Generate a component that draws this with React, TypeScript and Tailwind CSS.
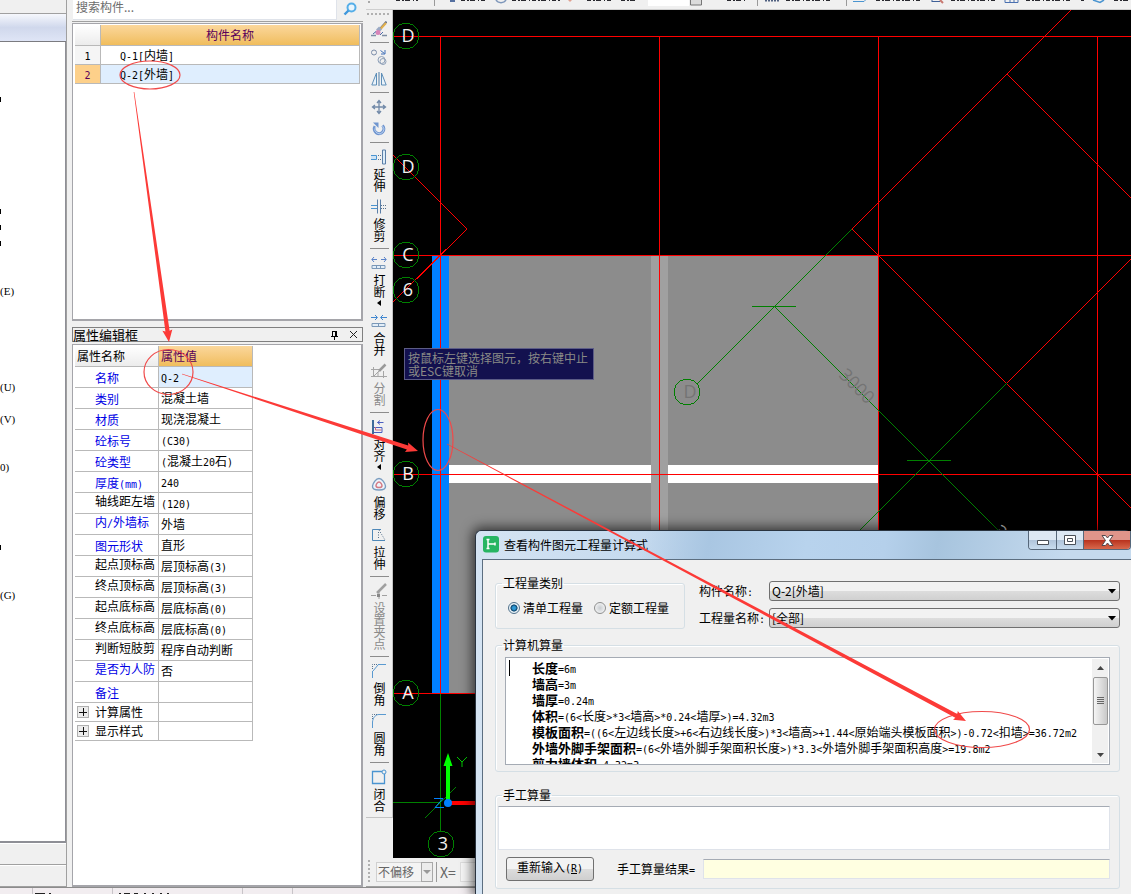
import React from "react";

/* Chinese glyphs take the inherited size; Latin runs use a half-width monospace. */
function Mixed({ text }: { text: string }) {
  return (
    <>
      {text
        .split(/([\x20-\x7e]+)/)
        .filter(Boolean)
        .map((part, i) =>
          /^[\x20-\x7e]+$/.test(part) ? (
            <span key={i} className="font-['DejaVu_Sans_Mono',monospace] text-[10px] leading-none">
              {part}
            </span>
          ) : (
            part
          ),
        )}
    </>
  );
}

const shortcuts: Record<number, string> = { 0: "|", 7: "|", 8: "|", 9: "|", 12: "(E)", 18: "(U)", 20: "(V)", 23: "0)", 28: "|", 31: "(G)" };

function ModuleStrip() {
  return (
    <aside className="flex w-[67px] shrink-0 flex-col border-r border-[#a0a0a0] bg-[#f0f0f0]">
      <div className="h-[14px] shrink-0 border-b border-[#a0a0a0]" />
      <div className="h-7 shrink-0 border-b border-[#7b7b80] bg-linear-to-b from-[#f6f8fd] via-[#d0d8ec] to-[#dfe5f6]" />
      <ul className="flex-1 overflow-hidden border-r border-b-2 border-[#8e8f96] bg-white pt-[49px]">
        {Array.from({ length: 32 }, (_, i) => (
          <li key={i} className="flex h-4 items-center text-[12px] text-black">
            {shortcuts[i] === "|" ? (
              <span className="h-[5px] w-px bg-black" />
            ) : (
              <span className="font-['Liberation_Serif',serif] text-[11px]">{shortcuts[i]}</span>
            )}
          </li>
        ))}
      </ul>
      <div className="h-[22px] shrink-0 border-b border-[#a0a0a0] border-t border-t-white" />
      <div className="h-[22px] shrink-0 border-b border-[#a0a0a0] border-t border-t-white" />
    </aside>
  );
}

const properties: { name: string; value: string; black?: boolean; wrap?: boolean; group?: boolean }[] = [
  { name: "名称", value: "Q-2" },
  { name: "类别", value: "混凝土墙" },
  { name: "材质", value: "现浇混凝土" },
  { name: "砼标号", value: "(C30)" },
  { name: "砼类型", value: "(混凝土20石)" },
  { name: "厚度(mm)", value: "240" },
  { name: "轴线距左墙", value: "(120)", black: true, wrap: true },
  { name: "内/外墙标", value: "外墙", wrap: true },
  { name: "图元形状", value: "直形" },
  { name: "起点顶标高", value: "层顶标高(3)", black: true, wrap: true },
  { name: "终点顶标高", value: "层顶标高(3)", black: true, wrap: true },
  { name: "起点底标高", value: "层底标高(0)", black: true, wrap: true },
  { name: "终点底标高", value: "层底标高(0)", black: true, wrap: true },
  { name: "判断短肢剪", value: "程序自动判断", black: true, wrap: true },
  { name: "是否为人防", value: "否", wrap: true },
  { name: "备注", value: "" },
  { name: "计算属性", value: "", black: true, group: true },
  { name: "显示样式", value: "", black: true, group: true },
];

function Panels() {
  return (
    <section className="ml-[5px] flex w-[291px] shrink-0 flex-col text-[12px] leading-4 text-black">
      <div className="flex h-[22px] shrink-0 border-b border-[#a0a0a0]">
        <input
          aria-label="搜索构件"
          placeholder="搜索构件..."
          className="mb-px ml-px w-[264px] border-r border-b border-[#dfe3ea] bg-white px-[3px] pb-1.5 text-[12px] outline-none placeholder:text-[#6d6d6d]"
        />
        <button aria-label="搜索" className="flex flex-1 items-center justify-center pb-1">
          <svg width="14" height="14" viewBox="0 0 14 14" fill="none">
            <circle cx="8.5" cy="5.5" r="4" stroke="#55aee8" strokeWidth="2" fill="#e9f5fd" />
            <path d="M5.5 8.5 1.5 12.5" stroke="#3f97dc" strokeWidth="2.4" />
          </svg>
        </button>
      </div>
      <div className="mt-px h-[298px] shrink-0 border-2 border-t border-l border-[#a5a5aa] bg-white pt-px pr-px pl-0.5">
        <table className="w-full border-separate border-spacing-0 leading-[14px]">
          <thead>
            <tr>
              <th aria-label="序号" className="h-[21px] w-[26px] border-r border-b border-[#b9b9b9] bg-linear-to-b from-white to-[#ececec] p-0" />
              <th className="border-r border-b border-[#b9b9b9] bg-linear-to-b from-[#fbd79b] to-[#f0bd5c] p-0 font-normal text-[#5a005a]">构件名称</th>
            </tr>
          </thead>
          <tbody>
            <tr>
              <td className="h-[19px] border-r border-b border-[#b9b9b9] bg-[#f5f5f5] p-0 text-center"><Mixed text="1" /></td>
              <td className="border-r border-b border-[#b9b9b9] py-0 pr-0 pl-[19px]"><Mixed text="Q-1[内墙]" /></td>
            </tr>
            <tr>
              <td className="h-[19px] border-r border-b border-[#b9b9b9] bg-[#fdd08a] p-0 text-center text-[#5a005a]"><Mixed text="2" /></td>
              <td className="border-r border-b border-[#b9b9b9] bg-[#dfeefe] py-0 pr-0 pl-[19px]"><Mixed text="Q-2[外墙]" /></td>
            </tr>
          </tbody>
        </table>
      </div>
      <div className="mt-[6px] flex h-[15px] shrink-0 items-center border border-[#808080] bg-[#f0f0f0]">
        <h2 className="flex-1 text-[13px]">属性编辑框</h2>
        <button aria-label="固定" className="mr-[10px]">
          <svg width="9" height="10" viewBox="0 0 9 10" fill="none" stroke="#000">
            <path d="M2.5 1v5M2 1.5h5M1 6.5h7M4.5 7v3" />
            <path d="M6 1v5" strokeWidth="2" />
          </svg>
        </button>
        <button aria-label="关闭" className="mr-1">
          <svg width="9" height="9" viewBox="0 0 9 9" stroke="#222"><path d="m1 1 7 7M8 1 1 8" /></svg>
        </button>
      </div>
      <div className="mt-[2px] flex-1 border-2 border-t border-l border-[#a5a5aa] bg-white pt-px pl-0.5">
        <table className="table-fixed border-separate border-spacing-0">
          <thead>
            <tr>
              <th className="h-[21px] w-[84px] border-r border-b border-[#b9b9b9] bg-linear-to-b from-white to-[#ececec] p-0 pl-0.5 text-left font-normal">属性名称</th>
              <th className="w-[94px] border-r border-b border-[#b9b9b9] bg-linear-to-b from-[#fbd79b] to-[#f0bd5c] p-0 pl-0.5 text-left font-normal text-[#5a005a]">属性值</th>
            </tr>
          </thead>
          <tbody>
            {properties.map((p, i) => (
              <tr key={p.name} className={p.group ? "h-[19px]" : "h-[21px]"}>
                <td className={"overflow-hidden border-r border-b border-[#b9b9b9] p-0 whitespace-nowrap " + (p.black ? "" : "text-[#0000e6]")}>
                  <div className={"flex items-center " + (p.wrap ? "h-5 pb-1" : p.group ? "h-[18px]" : "h-5 pt-0.5")}>
                    <span className="flex w-5 shrink-0 pl-0.5">
                      {p.group && (
                        <button aria-label="展开" className="flex size-3 items-center justify-center border border-[#b0b0b0] bg-[#ececec]">
                          <svg width="8" height="8" viewBox="0 0 8 8" stroke="#111"><path d="M0 4.5h8M4.5 0v8" /></svg>
                        </button>
                      )}
                    </span>
                    <span><Mixed text={p.name} /></span>
                  </div>
                </td>
                <td className={"border-r border-b border-[#b9b9b9] py-0 pr-0 pl-0.5 whitespace-nowrap " + (i === 0 ? "bg-[#dfeefe]" : "")}>
                  <Mixed text={p.value} />
                </td>
              </tr>
            ))}
          </tbody>
        </table>
      </div>
    </section>
  );
}

const blue = "#5b7fa8";
const sky = "#4a94d0";
const icons: Record<string, React.ReactNode> = {
  brush: (
    <>
      <path d="M0 14.5h5M11 14.5h5" stroke="#7d8da3" strokeWidth="1.5" />
      <path d="M15.5.5 9 8" stroke="#6b7688" strokeWidth="2" />
      <path d="m15 2-5.500 6" stroke="#e3b04b" strokeWidth="2" />
      <path d="m9.500 7-3 3" stroke="#9aa9c4" strokeWidth="4" />
      <circle cx="7" cy="11.5" r="2.5" fill="#d884b8" />
      <path d="m2 13 3-2.500M9 14l3-3" stroke="#4a6ea8" />
    </>
  ),
  copy: (
    <>
      <circle cx="3" cy="3.5" r="2.5" stroke="#7b8ca8" />
      <circle cx="10.5" cy="11" r="3.5" stroke="#8ea0b8" />
      <circle cx="12" cy="12.5" r="3" stroke="#8ea0b8" />
      <path d="m9.500 1.500 4 3M14 1v4h-4" stroke="#3f6fb8" />
    </>
  ),
  mirror: (
    <>
      <path d="M5.5 2v12H.8zM10.5 2v12h4.700z" stroke="#5f8fb8" fill="#eaf3fa" />
      <path d="M8 1v14" stroke="#4f7fa8" />
    </>
  ),
  move: <path d="M8 2v12M2 8h12M6 4l2-2.500L10 4M6 12l2 2.500 2-2.500M4 6 1.500 8 4 10M12 6l2.500 2-2.500 2" stroke="#7189a8" strokeWidth="1.3" />,
  rotate: (
    <>
      <path d="M11.500 4.500a4.800 4.800 0 1 1-7.500.8" stroke="#6f95cf" strokeWidth="3" />
      <path d="M2 1.500h5.500V7z" fill="#6f95cf" />
      <path d="M11.500 5a4.500 4.500 0 1 1-7 1" stroke="#b8cff0" />
    </>
  ),
  extend: (
    <>
      <path d="M11.500 1h3v14h-3z" stroke={blue} fill="#dcecf8" />
      <path d="M0 6.500h5.500v4H0" stroke={sky} fill="#cfe4f5" />
      <path d="M7 6.500h4M7 10.500h4" stroke="#55708c" strokeDasharray="1 1" />
    </>
  ),
  trim: (
    <>
      <path d="M6.500.5v14M9.500.5v14" stroke={blue} />
      <path d="M0 6.500h6M0 9.500h6" stroke={sky} />
      <path d="M10 6.500h5M10 9.500h5" stroke="#55708c" strokeDasharray="1 1" />
    </>
  ),
  breaks: (
    <>
      <path d="M1 4.500h5M10 4.500h5M3 2 .8 4.500 3 7M13 2l2.200 2.500L13 7" stroke="#5a82c8" />
      <path d="M1 10.500h13v3H1zM5.500 10.500v3M9.500 10.500v3" stroke="#7a98b8" fill="#e3eef8" />
    </>
  ),
  merge: (
    <>
      <path d="M0 4.500h6M10 4.500h6M4 2l2.500 2.500L4 7M12 2 9.500 4.500 12 7" stroke="#3f86d0" />
      <path d="M1 10.500h13v3H1zM7.500 10.500v3" stroke="#7a98b8" fill="#e3eef8" />
    </>
  ),
  split: (
    <>
      <path d="M2.500 4v10M12.500 8v7M0 13.500h16M0 6.500h9M7 9v5M3 13l5-5" stroke="#a6a6a6" />
      <path d="m8 8 6.500-6.500" stroke="#9a9a9a" strokeWidth="2.5" />
    </>
  ),
  align: (
    <>
      <path d="M2 1v14" stroke="#3e6a9a" strokeWidth="2" />
      <path d="M12.500 3.500h-6M9 1.500l-2.500 2 2.500 2M3 8.500h8v5H3" stroke="#4a5fc0" />
      <path d="M4.500 8v3h6" stroke="#c86a80" />
    </>
  ),
  offset: (
    <>
      <path d="M8 1.500c3 0 6 4.500 6.500 7.500.3 3-2 4-6.500 4s-6.800-1-6.500-4C2 6 5 1.500 8 1.500z" stroke="#7b9dc0" fill="#eef4fb" strokeWidth="1.4" />
      <path d="M8 5c1.600 0 3 2.500 3 3.700S9.500 10.500 8 10.500 5 10 5 8.700 6.400 5 8 5z" stroke="#d47b84" strokeWidth="1.5" />
    </>
  ),
  stretch: (
    <>
      <path d="M10 2.500H1.500v11H14" stroke="#4f88b8" />
      <path d="m8 3 6 10M7.500 5v6" stroke="#55708c" strokeDasharray="1 1.5" />
    </>
  ),
  grip: (
    <>
      <path d="m6 10 9-9" stroke="#a0a0a0" strokeWidth="2.5" />
      <path d="M0 12.500h5M11 12.500h5M8 9v7" stroke="#a0a0a0" />
      <path d="M6 11h3v3H6z" fill="#888" />
    </>
  ),
  chamfer: (
    <>
      <path d="M7 1.500h8M1.500 8v7M2 8l5-6" stroke="#5a9ad0" />
      <path d="M1.500 6V1.500h5" stroke="#55708c" strokeDasharray="1 1" />
    </>
  ),
  fillet: (
    <>
      <path d="M8 1.500h7M1.500 9v6M1.500 9C2 4 5 1.500 8 1.500" stroke="#5a9ad0" />
      <path d="M1.500 6V1.500h5" stroke="#55708c" strokeDasharray="1 1" />
    </>
  ),
  close: (
    <>
      <path d="M11 2.500H1.500v12h12V5" stroke="#4a94d0" strokeWidth="1.3" />
      <circle cx="13" cy="3" r="2" stroke="#4a94d0" />
    </>
  ),
};

const tools: { icon?: string; label?: string; name?: string; menu?: boolean; off?: boolean }[] = [
  { icon: "brush", name: "格式刷" },
  {},
  { icon: "copy", name: "复制" },
  { icon: "mirror", name: "镜像" },
  {},
  { icon: "move", name: "移动" },
  { icon: "rotate", name: "旋转" },
  {},
  { icon: "extend", label: "延伸" },
  { icon: "trim", label: "修剪" },
  {},
  { icon: "breaks", label: "打断", menu: true },
  { icon: "merge", label: "合并" },
  { icon: "split", label: "分割", off: true },
  {},
  { icon: "align", label: "对齐", menu: true },
  { icon: "offset", label: "偏移" },
  { icon: "stretch", label: "拉伸" },
  {},
  { icon: "grip", label: "设置夹点", off: true },
  {},
  { icon: "chamfer", label: "倒角" },
  { icon: "fillet", label: "圆角" },
  {},
  { icon: "close", label: "闭合" },
];

function ToolColumn() {
  return (
    <div className="w-[27px] shrink-0 bg-[#f0f0f0]">
      <div role="toolbar" aria-label="修改" className="flex flex-col items-center gap-[6px] border-r border-b border-[#c4c4c4] pb-1">
        <div className="mt-[3px] h-[2px] w-6 bg-[repeating-linear-gradient(90deg,#b0b0b0_0_2px,transparent_2px_4px)]" />
        {tools.map((t, i) =>
          t.icon ? (
            <button
              key={i}
              aria-label={t.label ?? t.name}
              className={"flex flex-col items-center gap-[3px] pb-px text-[12px] leading-[18px] " + (t.label ? "" : "-mb-px ") + (t.off ? "text-[#8a8a8a]" : "text-black")}
            >
              <svg width="16" height="16" viewBox="0 0 16 16" fill="none">{icons[t.icon]}</svg>
              {t.label && (
                <span className="flex flex-col items-center">
                  <span className="[writing-mode:vertical-rl]">{t.label}</span>
                  {t.menu && (
                    <svg width="4" height="8" viewBox="0 0 4 8"><path d="M4 2v6L0 5z" /></svg>
                  )}
                </span>
              )}
            </button>
          ) : (
            <hr key={i} className="-mt-px h-px w-[19px] border-0 bg-[#8c8c8c]" />
          ),
        )}
      </div>
    </div>
  );
}

const topText = [[396, 418], [461, 485], [512, 560], [587, 611], [621, 635], [727, 747], [786, 832], [876, 921], [951, 996], [1026, 1070], [1081, 1084], [1114, 1131]];

function TopToolbar() {
  return (
    <div className="h-[10px] shrink-0 overflow-hidden border-b border-[#cfcfcf] bg-[#f0f0f0]">
      <svg width="766" height="9" viewBox="366 0 766 9" fill="none">
        {topText.map(([a, b]) => (
          <path key={a} d={`M${a} .5H${b}`} stroke="#2a2a30" strokeDasharray="4 2 2 1 5 3 1 2" />
        ))}
        <path d="M434.500 0v6M757.500 0v6M846.500 0v6" stroke="#9a9a9a" />
        <path d="M450 1h5" stroke="#5570a0" strokeWidth="2" />
        <path d="M496 0c2 3.500 8 3.500 10 0" stroke="#7d96ba" strokeWidth="1.5" />
        <path d="M568 0h4l-2 2z" fill="#e0a090" />
        <path d="M648 0h41v6h-41z" fill="#fff" />
        <path d="M690.500-1h11v6h-11z" fill="#dcdcdc" stroke="#777" />
        <path d="M765 .5h14" stroke="#506080" strokeDasharray="2 1" strokeWidth="2" />
        <path d="M853 1.500h11l2-2" stroke="#4a94d0" />
        <path d="M932 1.500h8M932 0v2" stroke="#3f6098" />
        <path d="m940 0 3 3" stroke="#c87870" strokeWidth="2" />
        <path d="M1005 0v2.500h13V0M1010 0v2M1014 0v2" stroke="#4a70b0" />
        <path d="m1093 0 7 2.500 4-2.500" stroke="#4a94d0" strokeWidth="1.5" />
        <path d="M368 2h2" stroke="#a8a8a8" strokeWidth="2" />
      </svg>
    </div>
  );
}

const axes: [string, number, number][] = [
  ["D", 406, 36], ["D", 406, 167], ["C", 406, 255], ["6", 406, 290], ["B", 406, 474], ["A", 406, 693], ["3", 441, 844],
];

function ring(cx: number, cy: number) {
  return Array.from({ length: 12 }, (_, i) => {
    const a = (i * Math.PI) / 6 - Math.PI / 2;
    return `${(cx + 13 * Math.cos(a)).toFixed(1)},${(cy + 13 * Math.sin(a)).toFixed(1)}`;
  }).join(" ");
}

function Drawing() {
  return (
    <main className="relative flex-1 overflow-hidden bg-black">
      <svg className="absolute inset-0 h-full w-full" fill="none" fontFamily="'Open Sans', sans-serif">
        <g transform="translate(-393 -10)">
          <path d="M449 256h429v437H449z" fill="#8c8c8c" />
          <path d="M449 465h429v18H449z" fill="#fff" />
          <path d="M651 256h17v437h-17z" fill="#a0a0a0" />
          <path d="M432 256h17v437h-17z" fill="#0080ff" />
          <g shapeRendering="crispEdges">
            <path d="M393 36.500H2000M393 255.500H2000M393 474.500H2000M393 693.500H2000M440.500 37v656M659.500 37v656M878.500 37v656M1097.500 37v656" stroke="#f00" />
            <path d="M393 155l74 74-74 73M1071 10 852 229l279 279M1007 74l124 124M1131 259l-124 124" stroke="#f00" />
            <path d="M852 229 697 384M774 306l226 226M1007 383 859 531M752 306.500h44M907 460.500h44M393 802.500h47M440.500 694v137M425 818l31-31" stroke="#008000" />
            {axes.map(([l, x, y]) => <polygon key={l + y} points={ring(x, y)} stroke="#008000" />)}
            <polygon points={ring(687, 392)} stroke="#008000" />
          </g>
          <g fill="#f0f0f0" fontSize="18" textAnchor="middle">
            {axes.map(([l, x, y]) => <text key={l + y} x={x + 2} y={y + 6}>{l}</text>)}
            <text x="690" y="398" fill="#747474">D</text>
            <text transform="translate(856 387) rotate(45)" y="5" fontSize="18" fill="#747474">3000</text>
            <text transform="translate(998 534) rotate(45)" y="3" fontSize="18" fill="#c0c0c0">3</text>
          </g>
          <path d="M446 765h4v36h-4zM448 753l4.500 13h-9z" fill="#0f0" />
          <path d="m457 757 5 5 5-5M462 762v5" stroke="#0c0" />
          <path d="M450 801h40v4h-40z" fill="#f00" />
          <path d="M434 798.500h9l-8 9h9" stroke="#0080ff" />
          <circle cx="448" cy="803" r="4" fill="#0080ff" />
        </g>
      </svg>
      <div className="absolute top-[338px] left-[11px] w-[190px] border border-[#5c5c86] bg-[#13114f] px-[3px] py-0.5 text-[12px] leading-[13px] whitespace-nowrap text-[#8a8a86]">
        按鼠标左键选择图元，按右键中止
        <br />
        或ESC键取消
      </div>
    </main>
  );
}

function OffsetBar() {
  return (
    <div className="flex h-[29px] shrink-0 items-center border-b border-[#a0a0a0] bg-[#f0f0f0] py-1 pl-[2px] text-[12px] text-[#666]">
      <div className="h-6 w-[2px] bg-[repeating-linear-gradient(#b0b0b0_0_2px,transparent_2px_4px)]" />
      <div className="relative ml-[6px] w-[57px] shrink-0">
        <select aria-label="偏移方式" className="h-5 w-full appearance-none border border-[#d0d0d0] bg-[#f4f4f4] pl-px text-[12px] outline-none">
          <option>不偏移</option>
        </select>
        <span className="pointer-events-none absolute top-0 right-0 flex h-5 w-3 items-center justify-center border border-[#a8a8a8] bg-[#ececec]">
          <svg width="8" height="4" viewBox="0 0 8 4"><path d="M0 0h8L4 4z" fill="#999" /></svg>
        </span>
      </div>
      <span className="mx-[3px] h-5 w-px bg-[#9a9a9a]" />
      <label htmlFor="offset-x" className="text-[14px]">X=</label>
      <input id="offset-x" className="ml-1 h-5 w-20 border border-[#ddd] bg-[#f6f6f6]" />
    </div>
  );
}

const formulas: [string, string][] = [
  ["长度", "=6m"],
  ["墙高", "=3m"],
  ["墙厚", "=0.24m"],
  ["体积", "=(6<长度>*3<墙高>*0.24<墙厚>)=4.32m3"],
  ["模板面积", "=((6<左边线长度>+6<右边线长度>)*3<墙高>+1.44<原始端头模板面积>)-0.72<扣墙>=36.72m2"],
  ["外墙外脚手架面积", "=(6<外墙外脚手架面积长度>)*3.3<外墙外脚手架面积高度>=19.8m2"],
  ["剪力墙体积", "=4.32m3"],
];

function Combo({ id, label, value }: { id: string; label: string; value: string }) {
  return (
    <div className="flex items-center">
      <label htmlFor={id} className="w-[70px] shrink-0"><Mixed text={label} /></label>
      <div className="relative flex-1">
        <select id={id} className="block h-5 w-full appearance-none rounded-[3px] border border-[#707070] bg-linear-to-b from-[#f2f2f2] from-50% via-[#dddddd] via-50% to-[#d0d0d0] pl-0.5 text-[12px] text-black outline-none">
          <option>{value}</option>
        </select>
        <svg className="pointer-events-none absolute top-2 right-1" width="8" height="5" viewBox="0 0 8 5"><path d="M0 0h8L4 4.500z" /></svg>
      </div>
    </div>
  );
}

function Radio({ label, checked }: { label: string; checked?: boolean }) {
  return (
    <label className="flex items-center gap-[3px]">
      <input
        type="radio"
        name="quantity"
        defaultChecked={checked}
        className="size-3 appearance-none rounded-full border border-[#8e8f8f] bg-[radial-gradient(circle,#c8ccd0,#ffffff)] checked:border-[#52728c] checked:bg-[radial-gradient(circle,#2f9ad6_0_20%,#0b3f66_45%,#e8f2f8_55%)]"
      />
      {label}
    </label>
  );
}

const group = "rounded-[3px] border border-[#d5dfe5] shadow-[inset_1px_1px_0_#fff]";

function Dialog() {
  return (
    <div
      role="dialog"
      aria-labelledby="dialog-title"
      className="absolute top-[530px] right-0 bottom-0 left-[475px] flex flex-col rounded-t-[6px] border-t border-l border-[#2a3440] bg-linear-to-r from-[#d5e4f3] via-[#b5d0ea] to-[#c8dcf0] pl-[6px] text-[12px] leading-4 text-black shadow-[0_0_12px_3px_rgba(0,0,0,0.6)]"
    >
      <header className="flex h-7 shrink-0 bg-[linear-gradient(100deg,transparent_0_25%,#a9c6e2_35%,#b8d3ed_50%,#b5d0eb_62%,#a7c4de_70%,#c5daee_90%)]">
        <svg className="mt-[5px] ml-px" width="16" height="17" viewBox="0 0 16 17" fill="none">
          <rect width="16" height="16.5" rx="3" fill="#27b562" />
          <path d="M5 3.500v9M3.500 3.500h3M3.500 12.500h3M5 8h7M12 6.500v3" stroke="#fff" strokeWidth="1.5" />
        </svg>
        <h1 id="dialog-title" className="mt-[6px] ml-[5px] flex-1">查看构件图元工程量计算式</h1>
        <div className="flex h-[19px] overflow-hidden rounded-b-[4px] border border-t-0 border-[#56677a]">
          <button aria-label="最小化" className="flex w-7 items-end justify-center border-r border-[#56677a] bg-linear-to-b from-[#dce8f4] from-50% via-[#b0c4da] via-50% to-[#c8dcee] pb-1">
            <svg width="12" height="5" viewBox="0 0 12 5"><path d="M.5.5h11v4H.5z" fill="#fff" stroke="#4a5058" /></svg>
          </button>
          <button aria-label="最大化" className="flex w-[27px] items-center justify-center border-r border-[#56677a] bg-linear-to-b from-[#dce8f4] from-50% via-[#b0c4da] via-50% to-[#c8dcee]">
            <svg width="12" height="10" viewBox="0 0 12 10"><path d="M.5.5h11v9H.5zM3.500 3.500h5v3h-5z" fill="#fff" stroke="#4a5058" /></svg>
          </button>
          <button aria-label="关闭对话框" className="flex w-[46px] items-center justify-center bg-linear-to-b from-[#e0958a] from-50% via-[#b8301c] via-50% to-[#d8684c]">
            <svg width="13" height="11" viewBox="0 0 13 11"><path d="M1 .5h3.500l2 2.500 2-2.500H12L8.500 5.500l3.500 5H8.500l-2-2.500-2 2.500H1l3.500-5z" fill="#fff" stroke="#54484c" /></svg>
          </button>
        </div>
      </header>
      <div className="flex flex-1 flex-col border-t border-l border-[#5c6e80] bg-[#f0f0f0] pt-[15px] pr-[11px] pl-3">
        <div className="flex gap-[14px]">
          <fieldset className={"w-[190px] shrink-0 pl-3 " + group}>
            <legend className="-ml-[6px] px-px"><Mixed text="工程量类别" /></legend>
            <div className="flex gap-[11px] pt-[9px] pb-3">
              <Radio label="清单工程量" checked />
              <Radio label="定额工程量" />
            </div>
          </fieldset>
          <div className="flex flex-1 flex-col gap-[7px] pt-[6px]">
            <Combo id="component" label="构件名称:" value="Q-2[外墙]" />
            <Combo id="quantity-name" label="工程量名称:" value="[全部]" />
          </div>
        </div>
        <fieldset className={"mt-2 px-[9px] pb-[6px] " + group}>
          <legend className="-ml-[3px] px-px">计算机算量</legend>
          <div className="mt-1 flex h-[108px] overflow-hidden border border-[#a5abb4] bg-white">
            <div role="textbox" aria-label="计算机算量" tabIndex={0} className="flex h-full flex-1 gap-[22px] overflow-hidden pt-0.5 pl-[3px]">
              <span className="h-4 w-px shrink-0 bg-black" />
              <div className="whitespace-nowrap">
                {formulas.map(([name, expr]) => (
                  <p key={name} className="flex h-4 items-center">
                    <b className="text-[13px]">{name}</b>
                    <span><Mixed text={expr} /></span>
                  </p>
                ))}
              </div>
            </div>
            <div className="my-px mr-px flex w-4 shrink-0 flex-col items-center bg-[#f0f0f0]">
              <svg width="16" height="18" viewBox="0 0 16 18"><path d="m5 11 3.500-4 3.500 4z" fill="#444" /></svg>
              <div className="flex h-12 w-[15px] items-center justify-center rounded-[2px] border border-[#979797] bg-linear-to-r from-[#f5f5f5] to-[#c9c9c9]">
                <svg width="7" height="8" viewBox="0 0 7 8" stroke="#666"><path d="M0 .5h7M0 2.500h7M0 4.500h7M0 6.500h7" /></svg>
              </div>
              <svg className="mt-auto" width="16" height="17" viewBox="0 0 16 17"><path d="m5 7 3.500 4L12 7z" fill="#444" /></svg>
            </div>
          </div>
        </fieldset>
        <fieldset className={"mt-[15px] pr-[9px] pb-[7px] pl-[2px] " + group}>
          <legend className="ml-1 px-px">手工算量</legend>
          <textarea aria-label="手工算量" className="mt-[3px] block h-11 w-full resize-none border border-[#dfe3ea] border-t-[#a5abb4] bg-white outline-none" />
          <div className="mt-[7px] flex items-center pl-2">
            <button className="h-6 w-[88px] rounded-[3px] border border-[#707070] bg-linear-to-b from-[#f3f3f3] from-50% via-[#dddddd] via-50% to-[#cfcfcf] pb-0.5">
              重新输入<span className="font-['DejaVu_Sans_Mono',monospace] text-[10px]">(<u>R</u>)</span>
            </button>
            <label htmlFor="manual-result" className="ml-[23px]"><Mixed text="手工算量结果=" /></label>
            <input id="manual-result" readOnly className="ml-2 h-5 min-w-0 flex-1 border border-[#dfe3ea] border-t-[#a5abb4] bg-[#ffffe1] outline-none" />
          </div>
        </fieldset>
      </div>
    </div>
  );
}

function arrow(x1: number, y1: number, x2: number, y2: number) {
  const len = Math.hypot(x2 - x1, y2 - y1);
  const ux = (x2 - x1) / len;
  const uy = (y2 - y1) / len;
  const at = (d: number, w: number) => `${(x1 + ux * d - uy * w).toFixed(1)},${(y1 + uy * d + ux * w).toFixed(1)}`;
  const neck = len - 11;
  return [at(0, 0.3), at(neck, 2.1), at(neck - 1, 5), at(len, 0), at(neck - 1, -5), at(neck, -2.1), at(0, -0.3)].join(" ");
}

function Markup() {
  return (
    <svg className="pointer-events-none absolute inset-0 h-full w-full" fill="none">
      <g stroke="#f04a4a" strokeWidth="1.2">
        <ellipse cx="150" cy="75" rx="30" ry="14" />
        <ellipse cx="168.5" cy="372" rx="24.5" ry="22.5" />
        <ellipse cx="438" cy="440" rx="15" ry="30.5" />
        <ellipse cx="982" cy="729.5" rx="47.5" ry="18" />
      </g>
      <g fill="#fc3a37">
        <polygon points={arrow(134, 92, 169, 342)} />
        <polygon points={arrow(182, 374, 418, 451)} />
        <polygon points={arrow(447, 444, 966, 721)} />
      </g>
    </svg>
  );
}

export default function App() {
  return (
    <div className="relative flex h-screen flex-col overflow-hidden bg-[#f0f0f0] font-['Noto_Sans_CJK_SC',sans-serif]">
      <div className="flex min-h-0 flex-1">
        <ModuleStrip />
        <Panels />
        <div className="ml-[3px] flex min-w-0 flex-1 flex-col">
          <TopToolbar />
          <div className="flex min-h-0 flex-1">
            <ToolColumn />
            <Drawing />
          </div>
          <OffsetBar />
        </div>
      </div>
      <footer className="h-[7px] shrink-0 border-t border-[#8c8c8c] bg-[#f2edf0]">
        <svg width="300" height="6" viewBox="0 0 300 6">
          <path d="M32.500 0v6M112.500 0v6M242.500 0v6M292.500 0v6" stroke="#c8c4c8" />
          <path d="M35 5.500h10M49 5.500h2M119 5.500h2M124 5.500h6M134 5.500h4M144 5.500h2M152 5.500h2M160 5.500h2M167 5.500h2" stroke="#222" />
        </svg>
      </footer>
      <Dialog />
      <Markup />
    </div>
  );
}
